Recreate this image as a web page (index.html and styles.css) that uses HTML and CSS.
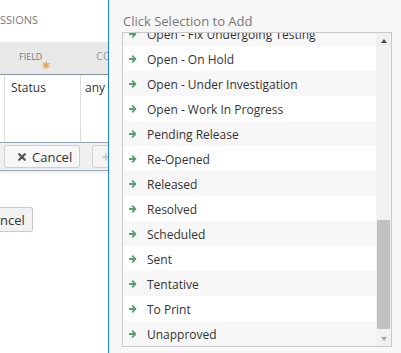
FILE: index.html
```html
<!DOCTYPE html>
<html>
<head>
<meta charset="utf-8">
<link rel="stylesheet" href="styles.css">
</head>
<body>
<div class="page">
  <div class="left">
    <div class="left-title">SSIONS</div>
    <div class="grid-head">
      <div class="hcell c0"></div>
      <div class="hcell c1">FIELD<span class="req">✱</span></div>
      <div class="hcell c2">CO</div>
    </div>
    <div class="grid-row">
      <div class="cell c0"></div>
      <div class="cell c1">Status</div>
      <div class="cell c2">any</div>
    </div>
    <div class="toolbar">
      <button class="btn"><svg class="x-icon" viewBox="0 0 8 8"><path d="M1.2 1.2 L6.8 6.8 M6.8 1.2 L1.2 6.8" stroke="#555" stroke-width="2.2" stroke-linecap="round"/></svg>Cancel</button>
      <span class="sep"></span>
      <button class="btn disabled"><svg class="plus-icon" viewBox="0 0 8 8"><path d="M4 0.5 V7.5 M0.5 4 H7.5" stroke="#ccc" stroke-width="2"/></svg></button>
    </div>
    <div class="footer"><button class="btn2">ncel</button></div>
  </div>
  <div class="right">
    <div class="title">Click Selection to Add</div>
    <div class="box">
      <div class="list">
        <div class="items">
          <div class="item"><svg class="arrow" viewBox="0 0 8 8"><path d="M0.5 4 H6.2 M3.6 1.2 L6.4 4 L3.6 6.8" fill="none" stroke="#5a9e70" stroke-width="1.8" stroke-linecap="round" stroke-linejoin="round"/></svg>Open - Fix Undergoing Testing</div>
          <div class="item"><svg class="arrow" viewBox="0 0 8 8"><path d="M0.5 4 H6.2 M3.6 1.2 L6.4 4 L3.6 6.8" fill="none" stroke="#5a9e70" stroke-width="1.8" stroke-linecap="round" stroke-linejoin="round"/></svg>Open - On Hold</div>
          <div class="item"><svg class="arrow" viewBox="0 0 8 8"><path d="M0.5 4 H6.2 M3.6 1.2 L6.4 4 L3.6 6.8" fill="none" stroke="#5a9e70" stroke-width="1.8" stroke-linecap="round" stroke-linejoin="round"/></svg>Open - Under Investigation</div>
          <div class="item"><svg class="arrow" viewBox="0 0 8 8"><path d="M0.5 4 H6.2 M3.6 1.2 L6.4 4 L3.6 6.8" fill="none" stroke="#5a9e70" stroke-width="1.8" stroke-linecap="round" stroke-linejoin="round"/></svg>Open - Work In Progress</div>
          <div class="item"><svg class="arrow" viewBox="0 0 8 8"><path d="M0.5 4 H6.2 M3.6 1.2 L6.4 4 L3.6 6.8" fill="none" stroke="#5a9e70" stroke-width="1.8" stroke-linecap="round" stroke-linejoin="round"/></svg>Pending Release</div>
          <div class="item"><svg class="arrow" viewBox="0 0 8 8"><path d="M0.5 4 H6.2 M3.6 1.2 L6.4 4 L3.6 6.8" fill="none" stroke="#5a9e70" stroke-width="1.8" stroke-linecap="round" stroke-linejoin="round"/></svg>Re-Opened</div>
          <div class="item"><svg class="arrow" viewBox="0 0 8 8"><path d="M0.5 4 H6.2 M3.6 1.2 L6.4 4 L3.6 6.8" fill="none" stroke="#5a9e70" stroke-width="1.8" stroke-linecap="round" stroke-linejoin="round"/></svg>Released</div>
          <div class="item"><svg class="arrow" viewBox="0 0 8 8"><path d="M0.5 4 H6.2 M3.6 1.2 L6.4 4 L3.6 6.8" fill="none" stroke="#5a9e70" stroke-width="1.8" stroke-linecap="round" stroke-linejoin="round"/></svg>Resolved</div>
          <div class="item"><svg class="arrow" viewBox="0 0 8 8"><path d="M0.5 4 H6.2 M3.6 1.2 L6.4 4 L3.6 6.8" fill="none" stroke="#5a9e70" stroke-width="1.8" stroke-linecap="round" stroke-linejoin="round"/></svg>Scheduled</div>
          <div class="item"><svg class="arrow" viewBox="0 0 8 8"><path d="M0.5 4 H6.2 M3.6 1.2 L6.4 4 L3.6 6.8" fill="none" stroke="#5a9e70" stroke-width="1.8" stroke-linecap="round" stroke-linejoin="round"/></svg>Sent</div>
          <div class="item"><svg class="arrow" viewBox="0 0 8 8"><path d="M0.5 4 H6.2 M3.6 1.2 L6.4 4 L3.6 6.8" fill="none" stroke="#5a9e70" stroke-width="1.8" stroke-linecap="round" stroke-linejoin="round"/></svg>Tentative</div>
          <div class="item"><svg class="arrow" viewBox="0 0 8 8"><path d="M0.5 4 H6.2 M3.6 1.2 L6.4 4 L3.6 6.8" fill="none" stroke="#5a9e70" stroke-width="1.8" stroke-linecap="round" stroke-linejoin="round"/></svg>To Print</div>
          <div class="item"><svg class="arrow" viewBox="0 0 8 8"><path d="M0.5 4 H6.2 M3.6 1.2 L6.4 4 L3.6 6.8" fill="none" stroke="#5a9e70" stroke-width="1.8" stroke-linecap="round" stroke-linejoin="round"/></svg>Unapproved</div>
        </div>
      </div>
      <div class="scroll">
        <div class="sb-btn"><span class="tri-up"></span></div>
        <div class="track"><div class="thumb"></div></div>
        <div class="sb-btn"><span class="tri-down"></span></div>
      </div>
    </div>
  </div>
</div>
</body>
</html>
```

FILE: styles.css
```css
html, body {
  margin: 0;
  padding: 0;
  background: #fff;
  font-family: "Open Sans", "Liberation Sans", sans-serif;
}

.page {
  display: flex;
  width: 401px;
  height: 353px;
  overflow: hidden;
}

.left {
  flex: none;
  width: 108px;
  border-right: 1px solid #1f7ae0;
  overflow: hidden;
  display: flex;
  flex-direction: column;
  background: #fff;
}

.left-title {
  height: 42px;
  box-sizing: border-box;
  padding-top: 12px;
  font-size: 11px;
  line-height: 16px;
  color: #7a7a7a;
  white-space: nowrap;
}

.grid-head {
  display: flex;
  height: 33px;
  background: #e8e8e8;
  border-bottom: 1px solid #8796ab;
  box-sizing: border-box;
}

.hcell {
  font-size: 9px;
  color: #777;
  box-sizing: border-box;
  white-space: nowrap;
}

.c0 { width: 5px; flex: none; }
.c1 { width: 76px; flex: none; }
.c2 { flex: 1; }

.hcell.c1 {
  padding: 9px 0 0 14px;
  line-height: 12px;
}

.hcell.c2 {
  padding: 6px 0 0 15px;
  font-size: 11px;
  line-height: 16px;
  color: #999;
}

.req {
  display: inline-block;
  vertical-align: -9px;
  margin-left: 0;
  font-size: 10px;
  line-height: 10px;
  color: #e2a868;
}

.grid-row {
  display: flex;
  height: 67px;
}

.cell {
  font-size: 12px;
  line-height: 16px;
  color: #333;
  padding-top: 5px;
  box-sizing: border-box;
  white-space: nowrap;
  border-right: 1px solid #dcdcdc;
}

.cell.c1 { padding-left: 6px; }
.cell.c2 { padding-left: 4px; border-right: none; }

.toolbar {
  display: flex;
  align-items: center;
  height: 29px;
  box-sizing: border-box;
  background: #efefef;
  border-top: 1px solid #97a5b8;
  border-bottom: 1px solid #97a5b8;
  padding-left: 4px;
  box-shadow: 0 2px 3px rgba(0, 0, 0, 0.08);
}

.btn {
  display: flex;
  align-items: center;
  height: 23px;
  box-sizing: border-box;
  border: 1px solid #cfcfcf;
  border-radius: 3px;
  background: #f7f7f7;
  font-family: "Open Sans", "Liberation Sans", sans-serif;
  font-size: 13px;
  color: #333;
  padding: 0 7px 0 13px;
  margin: 0;
}

.x-icon {
  width: 8px;
  height: 8px;
  margin-right: 6px;
}

.sep {
  width: 1px;
  height: 22px;
  background: #cfcfcf;
  margin: 0 6px 0 6px;
}

.btn.disabled {
  width: 30px;
  padding-left: 9px;
  background: #f3f3f3;
}

.plus-icon {
  width: 8px;
  height: 8px;
}

.footer {
  padding-top: 36px;
}

.btn2 {
  height: 25px;
  box-sizing: border-box;
  border: 1px solid #c8c8c8;
  border-left: none;
  border-radius: 0 3px 3px 0;
  background: #f2f2f2;
  font-family: "Open Sans", "Liberation Sans", sans-serif;
  font-size: 13px;
  color: #333;
  padding: 0 7px 0 0;
  margin: 0;
}

.right {
  flex: 1;
  background: #f7f7f7;
  display: flex;
  flex-direction: column;
  padding: 0 9px 6px 13px;
  min-width: 0;
}

.title {
  padding: 12px 0 0 1px;
  height: 32px;
  box-sizing: border-box;
  font-size: 13px;
  line-height: 18px;
  color: #777;
  white-space: nowrap;
}

.box {
  flex: 1;
  display: flex;
  border: 1px solid #c9c9c9;
  background: #fff;
  overflow: hidden;
  min-height: 0;
}

.list {
  flex: 1;
  overflow: hidden;
  min-width: 0;
}

.items {
  margin-top: -12px;
}

.item {
  display: flex;
  align-items: center;
  height: 25px;
  box-sizing: border-box;
  padding: 1px 0 0 6px;
  font-size: 12px;
  color: #333;
  white-space: nowrap;
}

.item:nth-child(odd) {
  background: #f7f7f7;
}

.arrow {
  width: 8px;
  height: 8px;
  flex: none;
  margin-right: 10px;
}

.scroll {
  flex: none;
  width: 15px;
  background: #f1f1f1;
  display: flex;
  flex-direction: column;
}

.sb-btn {
  height: 15px;
  display: flex;
  align-items: center;
  justify-content: center;
}

.tri-up {
  width: 0;
  height: 0;
  border-left: 3.5px solid transparent;
  border-right: 3.5px solid transparent;
  border-bottom: 4px solid #505050;
}

.tri-down {
  width: 0;
  height: 0;
  border-left: 3.5px solid transparent;
  border-right: 3.5px solid transparent;
  border-top: 4px solid #a3a3a3;
}

.track {
  flex: 1;
  display: flex;
  flex-direction: column;
  justify-content: flex-end;
  padding: 0 1px 2px 1px;
}

.thumb {
  height: 109px;
  background: #c1c1c1;
}
```
